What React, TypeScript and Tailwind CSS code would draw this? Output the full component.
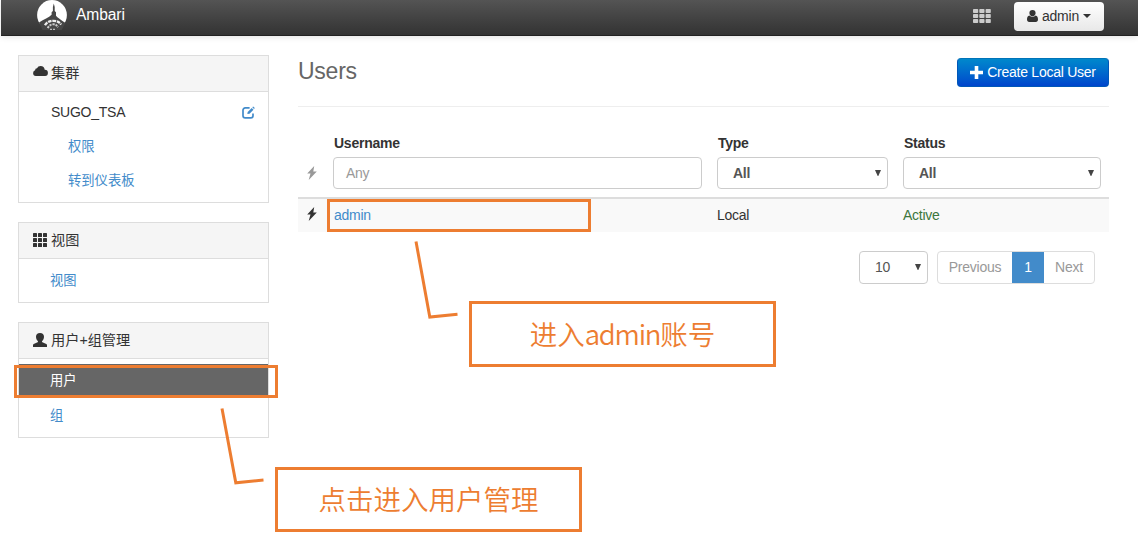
import type { ReactNode } from "react";

type IconProps = { className?: string };

const CloudIcon = ({ className }: IconProps) => (
  <svg viewBox="0 0 15 10" className={className} fill="currentColor">
    <path d="M3.2 10A3 3 0 0 1 .1 7 2.900 2.900 0 0 1 2.100 4.300 2 2 0 0 1 4 2.300 4 4 0 0 1 7.500 0a4.200 4.200 0 0 1 4.200 3.800A3.100 3.100 0 0 1 14.900 7a3 3 0 0 1-3.100 3z" />
  </svg>
);

const GridIcon = ({ className }: IconProps) => (
  <svg viewBox="0 0 14 14" className={className} fill="currentColor">
    {[0, 5, 10].map((y) =>
      [0, 5, 10].map((x) => <rect key={`${x}-${y}`} x={x} y={y} width="4" height="4" rx=".6" />),
    )}
  </svg>
);

const WideGridIcon = ({ className }: IconProps) => (
  <svg viewBox="0 0 18 14" className={className} fill="currentColor">
    {[0, 5, 10].map((y) =>
      [0, 6.3, 12.6].map((x) => <rect key={`${x}-${y}`} x={x} y={y} width="5.2" height="4" rx=".8" />),
    )}
  </svg>
);

const PersonIcon = ({ className }: IconProps) => (
  <svg viewBox="0 0 14 14" className={className} fill="currentColor">
    <path d="M7 0c2.600 0 4 1.400 4 3.700 0 2-.8 3.300-1.800 4.200-.3.400-.3 1.100.2 1.400l3.900 1.600c.5.300.7.700.7 1.300V14H0v-1.800c0-.6.200-1 .7-1.300l3.900-1.600c.5-.3.500-1 .2-1.400C3.800 7 3 5.700 3 3.700 3 1.400 4.400 0 7 0z" />
  </svg>
);

const BustIcon = ({ className }: IconProps) => (
  <svg viewBox="0 0 11 12" className={className} fill="currentColor">
    <circle cx="5.500" cy="3.100" r="3.100" />
    <path d="M2.400 5.500C.7 5.700 0 7.300 0 9.600 0 11 .9 12 2.200 12h6.600c1.300 0 2.200-1 2.200-2.400 0-2.300-.7-3.900-2.400-4.100a4.300 4.300 0 0 1-6.200 0z" />
  </svg>
);

const BoltIcon = ({ className }: IconProps) => (
  <svg viewBox="0 0 10 14" className={className} fill="currentColor">
    <path d="M7.200 0 .2 7.600h3.300L1.700 14 9.800 5.400H6.300z" />
  </svg>
);

const EditIcon = ({ className }: IconProps) => (
  <svg viewBox="0 0 13 13" className={className} fill="none" stroke="currentColor">
    <path d="M7.600 1.900H3.200A2.200 2.200 0 0 0 1 4.100v5.600a2.200 2.200 0 0 0 2.200 2.200h5.600A2.200 2.200 0 0 0 11 9.700V7.400" strokeWidth="1.700" />
    <path d="m5.300 8 .4-2.100 4-4 1.800 1.800-4 4z" fill="currentColor" stroke="none" />
    <path d="m10.300 1.200.8-.8 1.700 1.700-.8.800z" fill="currentColor" stroke="none" />
  </svg>
);

const Logo = () => (
  <svg viewBox="0 0 30 30" className="size-[30px] shrink-0">
    <circle cx="15" cy="15" r="14.900" fill="#fff" />
    <path
      d="M16.800 3.500 17.700 7v4l1.300 1.200v3.600c1.500 2 4.500 3.900 9.500 7.200L24 31H6l-4-8.500c5-3.500 9.800-4.700 12.600-7.700v-2.600L15.900 11V7z"
      fill="#474747"
    />
    <path d="M8 25.200c1.500-2.800 4.800-4.400 8.500-4.400s6 1.400 7.500 3.800" fill="none" stroke="#eee" strokeWidth="2.300" strokeDasharray="3.600 .8" />
    <path d="M10.800 28.200c1-2.600 3.200-3.900 5.600-3.900 2.200 0 3.500 1 4.600 2.900" fill="none" stroke="#ccc" strokeWidth="2" strokeDasharray="2.200 .9" />
    <path d="M13 29.300h5" stroke="#bbb" strokeWidth="1.200" strokeDasharray="2 1" />
  </svg>
);

function Panel({ icon, title, children }: { icon: ReactNode; title: string; children: ReactNode }) {
  return (
    <section className="border border-[#ddd] bg-white">
      <h2 className="flex h-9 items-center border-b border-[#ddd] bg-[#f5f5f5] pl-[14px] text-[14.200px] tracking-normal text-[#333]">
        <span className="flex w-[18px] items-center">{icon}</span>
        {title}
      </h2>
      {children}
    </section>
  );
}

function SelectBox({ value, className }: { value: string; className: string }) {
  return (
    <div className={`flex items-center justify-between rounded border border-[#ccc] bg-white pr-[6px] pl-[15px] text-[#555] ${className}`}>
      <span>{value}</span>
      <svg viewBox="0 0 6 6" className="mb-px size-[6px]" fill="#444">
        <path d="M0 0h6L3.300 6h-.6z" />
      </svg>
    </div>
  );
}

export default function App() {
  return (
    <div className="relative h-[549px] w-[1138px] overflow-hidden bg-white font-['Liberation_Sans','Noto_Sans_CJK_SC',sans-serif] text-[14px] tracking-[-0.25px] text-[#333]">
      <header className="ml-px flex h-9 justify-between border-b border-[#222] bg-linear-to-b from-[#545454] to-[#333] pr-[34px] pl-9 shadow-[0_1px_6px_rgba(0,0,0,0.12)]">
        <div className="flex h-[30px] items-center text-[15.600px] tracking-[-0.1px] text-white">
          <Logo />
          <span className="ml-[9px]">Ambari</span>
        </div>
        <div className="flex h-8 items-center">
          <WideGridIcon className="mr-[23px] h-[14px] w-[18px] text-[#ccc]" />
          <button className="flex h-[29px] w-[90px] items-center justify-center rounded bg-linear-to-b from-white to-[#e8e8e8] text-[#333]">
            <BustIcon className="mr-1 h-3 w-[11px]" />
            admin
            <svg viewBox="0 0 8 4" className="ml-1 h-1 w-2" fill="#333">
              <path d="M0 0h8L4 4z" />
            </svg>
          </button>
        </div>
      </header>

      <div className="flex pl-[18px]">
        <aside className="flex w-[251px] flex-col gap-[19px] pt-[19px]">
          <Panel icon={<CloudIcon className="mb-[5px] h-[10px] w-[15px]" />} title="集群">
            <div className="h-[110px] pr-[13px] pl-8">
              <div className="flex h-[38px] items-center justify-between pt-[3px]">
                SUGO_TSA
                <EditIcon className="size-[13px] text-[#428bca]" />
              </div>
              <div className="flex h-[34px] items-center pl-[17px] text-[13.300px] tracking-normal text-[#428bca]">权限</div>
              <div className="flex h-[34px] items-center pl-[17px] text-[13.300px] tracking-normal text-[#428bca]">转到仪表板</div>
            </div>
          </Panel>
          <Panel icon={<GridIcon className="mb-px size-[14px]" />} title="视图">
            <div className="flex h-[43px] items-center pt-px pl-[31px] text-[13.300px] tracking-normal text-[#428bca]">视图</div>
          </Panel>
          <Panel icon={<PersonIcon className="mb-px size-[14px]" />} title="用户+组管理">
            <div className="h-[78px] pt-[5px]">
              <div className="flex h-[33px] items-center bg-[#666] pt-px pl-[31px] text-[13.300px] tracking-normal text-white">用户</div>
              <div className="flex h-[35px] items-center pt-[2px] pl-[31px] text-[13.300px] tracking-normal text-[#428bca]">组</div>
            </div>
          </Panel>
        </aside>

        <main className="ml-[29px] w-[811px]">
          <div className="flex h-[71px] justify-between border-b border-[#eee]">
            <h1 className="mt-[18px] text-[23px] leading-[34px] text-[#666]">Users</h1>
            <button className="mt-[22px] flex h-[29px] w-[152px] items-center justify-center rounded border border-[#0057b8] border-t-[#0074b8] bg-linear-to-b from-[#0088cc] to-[#0044cc] text-white">
              <svg viewBox="0 0 13 13" className="mr-1 size-[13px]" fill="#fff">
                <path d="M4.700 0h3.600v4.700H13v3.600H8.300V13H4.700V8.300H0V4.700h4.700z" />
              </svg>
              Create Local User
            </button>
          </div>

          <div className="mt-[27px] grid h-[65px] grid-cols-[35px_384px_186px_205px] grid-rows-[23px_32px] border-b-2 border-[#ddd] text-[#333]">
            <span />
            <b className="pl-px leading-[19px]">Username</b>
            <b className="pl-px leading-[19px]">Type</b>
            <b className="pl-px leading-[19px]">Status</b>
            <div className="flex items-center pl-[9px]">
              <BoltIcon className="h-[14px] w-[10px] text-[#999]" />
            </div>
            <div className="flex w-[369px] items-center rounded border border-[#ccc] pl-3 text-[#999]">Any</div>
            <SelectBox value="All" className="w-[171px] font-bold" />
            <SelectBox value="All" className="w-[198px] font-bold" />
          </div>
          <div className="grid h-[33px] grid-cols-[35px_384px_186px_205px] items-center bg-[#f9f9f9]">
            <BoltIcon className="mb-[3px] ml-[9px] h-[14px] w-[10px]" />
            <span className="pl-px text-[#428bca]">admin</span>
            <span>Local</span>
            <span className="text-[#3c763d]">Active</span>
          </div>

          <div className="mt-[19px] flex h-[33px] justify-end pr-[14px]">
            <SelectBox value="10" className="mr-[9px] w-[69px]" />
            <div className="flex w-[158px] overflow-hidden rounded border border-[#ddd] text-[#999]">
              <span className="flex w-[74px] items-center justify-center">Previous</span>
              <span className="-my-px flex w-8 items-center justify-center bg-[#428bca] text-white">1</span>
              <span className="flex flex-1 items-center justify-center">Next</span>
            </div>
          </div>
        </main>
      </div>

      <div className="absolute top-[365px] left-[14px] h-[33px] w-[264px] border-3 border-[#ed7d31]" />
      <div className="absolute top-[199px] left-[327px] h-[33px] w-[264px] border-3 border-[#ed7d31]" />
      <svg viewBox="0 0 1138 549" className="pointer-events-none absolute inset-0 h-[549px] w-[1138px]" fill="none" stroke="#ed7d31" strokeWidth="3">
        <path d="m222 408.500 13.800 74.300 27.700-2.800" />
        <path d="m416 241.500 13.800 75.500 27.700-2.800" />
      </svg>
      <div className="absolute top-[467px] left-[275px] flex h-[65px] w-[307px] items-center justify-center border-3 border-[#ed7d31] bg-white pb-[2px] font-['Noto_Sans_CJK_SC',sans-serif] text-[27.500px] font-[350] tracking-normal text-[#ed7d31]">
        点击进入用户管理
      </div>
      <div className="absolute top-[301px] left-[469px] flex h-[66px] w-[307px] items-center justify-center border-3 border-[#ed7d31] bg-white font-['Noto_Sans_CJK_SC',sans-serif] text-[27.500px] font-[350] tracking-normal text-[#ed7d31]">
        进入<span className="tracking-[-1.200px]">admin</span>账号
      </div>
    </div>
  );
}
